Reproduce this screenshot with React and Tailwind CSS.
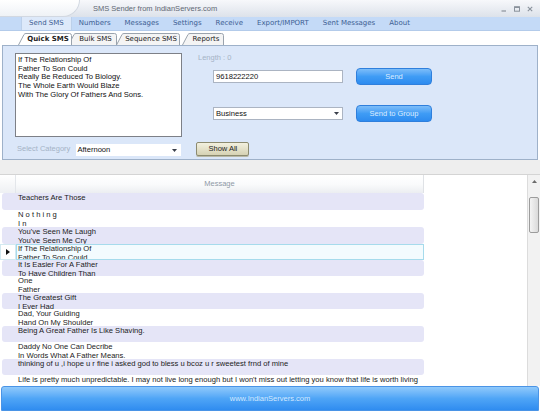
import React from "react";

const rows = [
  { l: ["Teachers Are Those"], h: "h-[17px]" },
  { l: ["N o t h i n g", "I n"], h: "h-[17px]" },
  { l: ["You've Seen Me Laugh", "You've Seen Me Cry"], h: "h-[17px]" },
  { l: ["If The Relationship Of", "Father To Son Could"], h: "h-[16px]", sel: true },
  { l: ["It Is Easier For A Father", "To Have Children Than"], h: "h-[16px]" },
  { l: ["One", "Father"], h: "h-[17px]" },
  { l: ["The Greatest Gift", "I Ever Had"], h: "h-[16px]" },
  { l: ["Dad, Your Guiding", "Hand On My Shoulder"], h: "h-[17px]" },
  { l: ["Being A Great Father Is Like Shaving."], h: "h-[16px]" },
  { l: ["Daddy No One Can Decribe", "In Words What A Father Means."], h: "h-[17px]" },
  { l: ["thinking of u ,i hope u r fine i asked god to bless u bcoz u r sweetest frnd of mine"], h: "h-[16px]" },
  { l: ["Life is pretty much unpredictable. I may not live long enough but I won't miss out letting you know that life is worth living"], h: "h-[17px]" },
];

const menu = ["Send SMS", "Numbers", "Messages", "Settings", "Receive", "Export/IMPORT", "Sent Messages", "About"];

const tabs = [
  { t: "Quick SMS", w: 54, cls: "w-[54px] ml-0 z-30", sel: true },
  { t: "Bulk SMS", w: 49, cls: "w-[49px] -ml-[4px] z-20" },
  { t: "Sequence SMS", w: 64, cls: "w-[64px] -ml-[1px] z-10" },
  { t: "Reports", w: 42, cls: "w-[42px] ml-[2px] z-0" },
];

function Tab({ tab }) {
  const w = tab.w;
  const d = `M0.5 12 L6 1.5 Q6.6 0.5 8 0.5 L${w - 2.5} 0.5 Q${w - 0.5} 0.5 ${w - 0.5} 2.5 L${w - 0.5} 12`;
  return (
    <div className={`relative h-[12px] shrink-0 ${tab.cls}`}>
      <svg className="absolute inset-0" width={w} height="12" viewBox={`0 0 ${w} 12`}>
        <path d={d + " Z"} fill={tab.sel ? "#ffffff" : "#f4f4f4"} stroke="none" />
        <path d={d} fill="none" stroke="#9aa3ad" strokeWidth="1" />
      </svg>
      <div
        className={`relative h-full pl-[6px] flex items-center justify-center font-['DejaVu_Sans',sans-serif] text-[7px] leading-none text-[#222] ${
          tab.sel ? "font-bold text-[6.8px]" : ""
        }`}
      >
        {tab.t}
      </div>
    </div>
  );
}

function Arrow() {
  return (
    <svg width="5" height="3" viewBox="0 0 5 3">
      <path d="M0 0 H5 L2.5 3 Z" fill="#3a3f4a" />
    </svg>
  );
}

export default function App() {
  return (
    <div className="w-[540px] h-[411px] overflow-hidden bg-white flex flex-col font-['Liberation_Sans',Arial,sans-serif]">
      {/* Title bar */}
      <div className="h-[17px] shrink-0 flex items-stretch bg-gradient-to-b from-[#f7f8fb] to-[#dde2ea]">
        <div className="w-[80px] bg-gradient-to-b from-[#ffffff] to-[#eff2f6] rounded-br-[18px] border-r border-b border-[#d2d8e1]" />
        <div className="ml-[13px] flex items-center text-[7.5px] text-[#5f6874]">SMS Sender from IndianServers.com</div>
        <div className="flex-1" />
        <div className="flex items-center gap-[7px] pr-[7px] pt-[1px]">
          <svg width="6" height="6" viewBox="0 0 6 6">
            <path d="M0.5 5 H5" stroke="#8a929c" strokeWidth="1.2" />
          </svg>
          <svg width="6" height="6" viewBox="0 0 6 6">
            <rect x="0.5" y="0.8" width="5" height="4.4" fill="none" stroke="#8a929c" strokeWidth="1" />
            <path d="M0.5 1.3 H5.5" stroke="#8a929c" strokeWidth="1.4" />
          </svg>
          <svg width="6" height="6" viewBox="0 0 6 6">
            <path d="M0.8 0.8 L5.2 5.2 M5.2 0.8 L0.8 5.2" stroke="#8a929c" strokeWidth="1.1" />
          </svg>
        </div>
      </div>

      {/* Menu bar */}
      <div className="h-[14px] shrink-0 flex items-stretch pl-[21px] bg-[#c4daf7] border-b border-[#b3cbea] font-['DejaVu_Sans',sans-serif] text-[7px] text-[#3d5e93]">
        {menu.map((m, i) => (
          <div
            key={m}
            className={`px-[7px] flex items-center leading-none ${
              i === 0 ? "bg-[#dde9fa] border-x border-[#bcd0ea] px-[6px]" : ""
            }`}
          >
            {m}
          </div>
        ))}
      </div>

      {/* Tabs */}
      <div className="h-[14px] shrink-0 flex items-end pl-[18px] bg-white">
        {tabs.map((t) => (
          <Tab key={t.t} tab={t} />
        ))}
      </div>

      {/* Panel */}
      <div className="h-[115px] shrink-0 mx-[2px] bg-[#dbe7f9] border border-[#9eb1c9] flex flex-col pt-[7px] pl-[12px] text-[7.6px] text-[#111]">
        <div className="flex items-start h-[84px]">
          <div className="w-[167px] h-[84px] bg-white border border-[#7d8087] pl-[2px] pt-[2px] leading-[8.7px] whitespace-pre-line">
            {"If The Relationship Of\nFather To Son Could\nReally Be Reduced To Biology.\nThe Whole Earth Would Blaze\nWith The Glory Of Fathers And Sons."}
          </div>
          <div className="ml-[16px] flex flex-col">
            <div className="h-[10px] flex items-center text-[#a5b3c6] text-[7.5px]">Length : 0</div>
            <div className="mt-[5px] pl-[15px] flex items-center h-[17px]">
              <div className="w-[130px] h-[13px] bg-white border border-[#abb4c2] flex items-center pl-[2px]">9618222220</div>
              <div className="ml-[13px] w-[76px] h-[17px] rounded-[4px] border border-[#2f7fdc] bg-gradient-to-b from-[#7cbdf9] via-[#3f9cf5] to-[#2d8bef] flex items-center justify-center text-[7.5px] text-[#dcecff]">
                Send
              </div>
            </div>
            <div className="mt-[20px] pl-[15px] flex items-center h-[17px]">
              <div className="w-[130px] h-[13px] bg-white border border-[#abb4c2] flex items-center pl-[2px] pr-[3px]">
                <span className="flex-1">Business</span>
                <Arrow />
              </div>
              <div className="ml-[13px] w-[76px] h-[17px] rounded-[4px] border border-[#2f7fdc] bg-gradient-to-b from-[#7cbdf9] via-[#3f9cf5] to-[#2d8bef] flex items-center justify-center text-[7.5px] text-[#dcecff]">
                Send to Group
              </div>
            </div>
          </div>
        </div>
        <div className="mt-[5px] h-[14px] flex items-center">
          <div className="ml-[2px] text-[#a5b3c6] text-[7.5px]">Select Category</div>
          <div className="ml-[6px] w-[105px] h-[12px] mt-[2px] bg-white flex items-center pl-[1px] pr-[4px]">
            <span className="flex-1">Afternoon</span>
            <Arrow />
          </div>
          <div className="ml-[15px] w-[53px] h-[14px] rounded-[2px] border border-[#8c8b70] bg-gradient-to-b from-[#f2f0df] to-[#d6d2b4] shadow-[0_1px_0_#b9b9a6] flex items-center justify-center text-[7.5px] text-[#222]">
            Show All
          </div>
        </div>
      </div>

      {/* Strip */}
      <div className="h-[15px] shrink-0 bg-[#eeeeee] border-b border-[#d4d4d4]" />

      {/* Grid */}
      <div className="flex-1 min-h-0 flex bg-white">
        <div className="w-[527px] flex flex-col overflow-hidden">
          <div className="h-[18px] shrink-0 flex">
            <div className="w-[16px] bg-gradient-to-b from-[#ffffff] to-[#eef0f3] border-r border-[#e3e6ea]" />
            <div className="w-[408px] bg-gradient-to-b from-[#ffffff] via-[#fafbfc] to-[#eceef1] border-r border-[#dfe2e6] flex items-center justify-center text-[7.5px] text-[#8e99a6]">
              Message
            </div>
          </div>
          {rows.map((r, i) => {
            if (r.sel) {
              return (
                <div key={i} className={`${r.h} shrink-0 flex`}>
                  <div className="w-[16px] bg-white border border-[#d3e9f1] flex items-center justify-center">
                    <svg width="4" height="6" viewBox="0 0 4 6">
                      <path d="M0 0 L4 3 L0 6 Z" fill="#111" />
                    </svg>
                  </div>
                  <div className="w-[408px] bg-[#f3fbfe] border border-[#a6dbec] pl-[1px] leading-[8.7px] text-[7.6px] text-[#1b1b1b] overflow-hidden whitespace-nowrap">
                    {r.l.map((t, j) => (
                      <div key={j}>{t}</div>
                    ))}
                  </div>
                </div>
              );
            }
            const lav = i % 2 === 0;
            return (
              <div key={i} className={`${r.h} shrink-0 flex`}>
                <div
                  className={`ml-[2px] w-[422px] rounded-[3px] pl-[16px] pt-[1px] leading-[8.7px] text-[7.6px] text-[#1b1b1b] overflow-hidden whitespace-nowrap ${
                    lav ? "bg-[#e5e5f7]" : "bg-white"
                  }`}
                >
                  {r.l.map((t, j) => (
                    <div key={j}>{t}</div>
                  ))}
                </div>
              </div>
            );
          })}
        </div>
        <div className="w-[13px] bg-[#f2f2f2] border-l border-[#dcdcdc] flex flex-col items-center pt-[5px]">
          <svg width="5" height="3" viewBox="0 0 5 3">
            <path d="M0 3 H5 L2.5 0 Z" fill="#6b6b6b" />
          </svg>
          <div className="mt-[14px] w-[10px] h-[36px] rounded-[2px] border border-[#9c9c9c] bg-gradient-to-r from-[#f4f4f4] to-[#dadada]" />
        </div>
      </div>

      {/* Footer */}
      <div className="h-[25px] shrink-0 mx-[1px] rounded-t-[3px] border border-[#4a94e6] bg-gradient-to-b from-[#8fc9fb] via-[#4fa5f6] to-[#2f8cf0] flex items-center justify-center text-[7.5px] text-[#d3e8ff]">
        www.IndianServers.com
      </div>
    </div>
  );
}
